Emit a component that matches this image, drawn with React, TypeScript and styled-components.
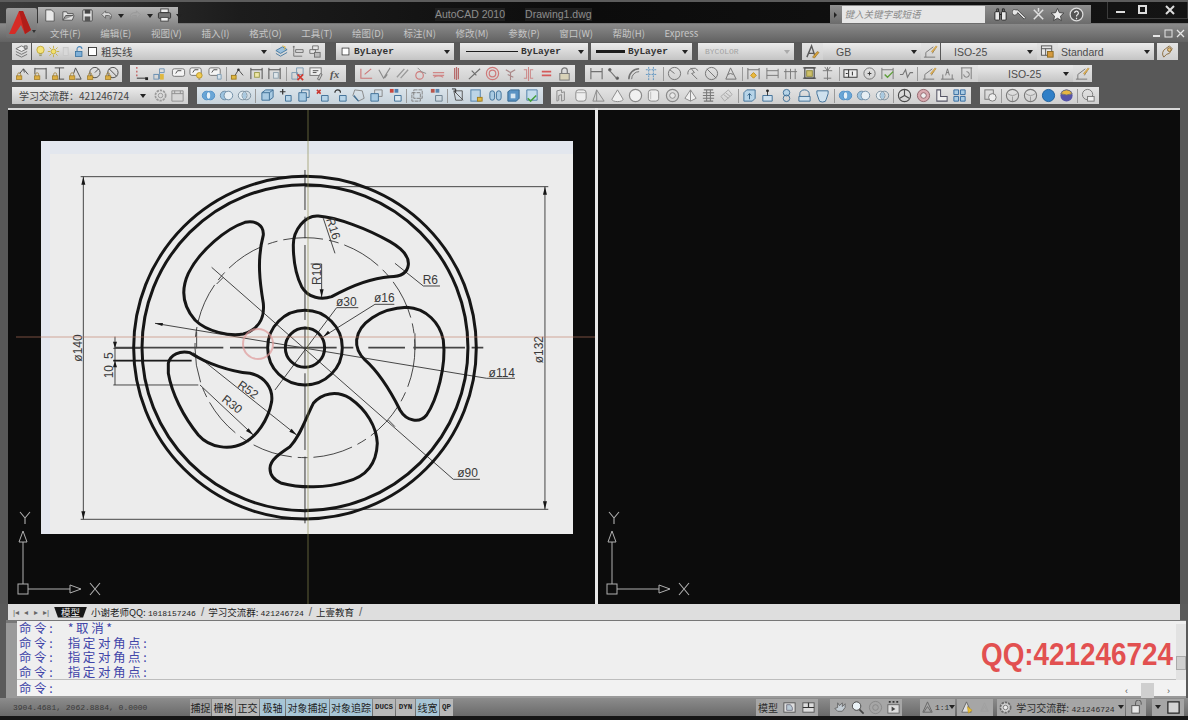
import React from "react";
import styled, { createGlobalStyle } from "styled-components";

const CJK = `"Noto Sans CJK SC", "Liberation Sans", sans-serif`;
const MONO = `"Liberation Mono", "Noto Sans CJK SC", monospace`;
const SANS = `"Liberation Sans", "Noto Sans CJK SC", sans-serif`;

const Global = createGlobalStyle`
  html, body { margin: 0; padding: 0; background: #000; }
  * { box-sizing: border-box; }
`;

const Shell = styled.div`
  width: 1188px;
  height: 720px;
  background: #5a5a5a;
  display: flex;
  flex-direction: column;
  overflow: hidden;
  position: relative;
  font-family: ${SANS};
`;

/* ---------- title bar ---------- */
const TitleBar = styled.div`
  height: 24px;
  flex: none;
  display: flex;
  align-items: flex-start;
  padding-left: 38px;
  background: linear-gradient(90deg, #3c3c3c 0, #1c1c1c 240px, #0c0c0c 50%, #141414 100%);
  border-top: 2px solid #5c5c5c;
  border-bottom: 1px solid #777;
`;

const Logo = styled.div`
  position: absolute;
  left: 6px;
  top: 8px;
  width: 31px;
  height: 30px;
  background: linear-gradient(#9c9c9c, #6f6f6f);
  border-radius: 2px;
`;

const QuickBar = styled.div`
  width: 140px;
  height: 17px;
  margin-top: 5px;
  padding-left: 4px;
  display: flex;
  align-items: center;
  gap: 4px;
  background: linear-gradient(#b4b4b4, #8a8a8a);
`;

const TitleText = styled.div<{ $ml: number }>`
  margin: 6px 0 0 ${(p) => p.$ml}px;
  font-size: 10.5px;
  line-height: 13px;
  color: #8d8d8d;
  background: #1f1f1f;
  white-space: nowrap;
`;

const SearchBox = styled.div`
  margin: 3px 0 0 238px;
  width: 262px;
  height: 19px;
  display: flex;
  align-items: center;
  background: linear-gradient(#8e8e8e, #6c6c6c);
`;

const SearchCaret = styled.div`
  width: 0;
  height: 0;
  margin: 0 5px 0 4px;
  border-left: 3px solid #222;
  border-top: 3px solid transparent;
  border-bottom: 3px solid transparent;
`;

const SearchInput = styled.div`
  width: 143px;
  height: 17px;
  padding-left: 3px;
  margin-right: 8px;
  background: #e6e6e6;
  color: #8a8a8a;
  font: italic 9.5px/17px ${CJK};
`;

const SearchIcons = styled.div`
  display: flex;
  gap: 4px;
`;

const WindowButtons = styled.div`
  margin: 0 0 0 16px;
  width: 81px;
  height: 17px;
  display: flex;
  align-items: center;
  border: 1px solid #3c3c3c;
  border-top: none;
  color: #ddd;
`;

const WinBtn = styled.div<{ $w: number }>`
  width: ${(p) => p.$w}px;
  display: flex;
  justify-content: center;
`;

/* ---------- menu ---------- */
const MenuBar = styled.div`
  height: 18px;
  flex: none;
  display: flex;
  align-items: center;
  gap: 19.6px;
  padding-left: 50px;
  background: linear-gradient(#8a8a8a, #626262);
`;

const MenuItem = styled.span`
  font: 9.5px/18px ${CJK};
  color: #c6c6c6;
  white-space: nowrap;
`;

const MenuSpacer = styled.div`
  margin-left: auto;
  width: 33px;
  margin-right: 3px;
  color: #e6e6e6;
  display: flex;
  justify-content: space-between;
`;

/* ---------- toolbars ---------- */
const ToolArea = styled.div`
  flex: none;
  height: 66px;
  padding: 1px 0 0 12px;
  display: flex;
  flex-direction: column;
  gap: 5px;
  background: #585858;
`;

const ToolRow = styled.div`
  display: flex;
  height: 17px;
`;

const Panel = styled.div<{ $w: number; $gap?: number; $tint?: boolean }>`
  width: ${(p) => p.$w}px;
  margin-left: ${(p) => p.$gap ?? 0}px;
  display: flex;
  align-items: center;
  justify-content: space-around;
  padding: 0 2px;
  background: ${(p) =>
    p.$tint ? "linear-gradient(#dbe5ec, #c8d3db)" : "linear-gradient(#e4e4e4, #cfcfcf)"};
`;

const Combo = styled.div<{ $w: number; $gap?: number; $mono?: boolean; $dim?: boolean; $pad?: number; $tight?: boolean }>`
  position: relative;
  width: ${(p) => p.$w}px;
  margin-left: ${(p) => p.$gap ?? 0}px;
  padding-left: ${(p) => p.$pad ?? 4}px;
  display: flex;
  align-items: center;
  gap: ${(p) => (p.$tight ? 0 : 3)}px;
  white-space: nowrap;
  overflow: hidden;
  background: linear-gradient(#ececec, #c4c4c4);
  color: ${(p) => (p.$dim ? "#a2a2a2" : p.$mono ? "#333" : "#4c4c4c")};
  font: ${(p) => (p.$mono ? `bold 9.5px ${MONO}` : `10.5px ${SANS}`)};
  &::after {
    content: "";
    position: absolute;
    right: 4px;
    top: 7px;
    border-top: 4px solid ${(p) => (p.$dim ? "#aaa" : "#222")};
    border-left: 3px solid transparent;
    border-right: 3px solid transparent;
  }
`;

const Divider = styled.i`
  width: 1px;
  height: 14px;
  flex: none;
  background: #9a9a9a;
`;

const LineSample = styled.div<{ $h: number; $w: number }>`
  width: ${(p) => p.$w}px;
  height: ${(p) => p.$h}px;
  background: #1c1c1c;
  flex: none;
`;

const IconSvg = styled.svg<{ $s?: number }>`
  width: ${(p) => p.$s ?? 15}px;
  height: ${(p) => p.$s ?? 15}px;
  flex: none;
  fill: none;
  stroke: #717171;
  stroke-width: 1;
`;

const CjkLabel = styled.span`
  margin-left: 2px;
  font: 10.5px ${CJK};
  color: #444;
`;

const ComboCjk = styled.span`
  font: 10px ${CJK};
  color: #444;
`;

const BYColor = styled.span`
  font: 8px ${MONO};
  color: #a2a2a2;
`;

const FxLabel = styled.span`
  font: italic bold 11px "Liberation Serif", serif;
  color: #555;
  width: 15px;
  text-align: center;
`;

const Lock = () => (
  <g stroke="#96721f" strokeWidth=".7">
    <path d="M2.8 10.5V8.8a1.6 1.6 0 0 1 3.2 0v1.7" />
    <rect x="1.5" y="10.5" width="5.8" height="4" fill="#dcae42" />
  </g>
);

const BLUE = "#4f8fc6";
const RED = "#c25a5a";
const YEL = "#dfb840";
const DARK = "#4a4a4a";

// 16 x 16 toolbar drawings, addressed by a short key
const shapes: Record<string, React.ReactNode> = {
  layers: (
    <>
      <path d="M2 5l6-3 6 3-6 3z" fill="#eee" />
      <path d="M2 8l6 3 6-3M2 11l6 3 6-3" />
      <path d="M11 2h3v3h-3z" fill="#bbb" />
    </>
  ),
  bulb: (
    <>
      <circle cx="8" cy="6" r="4.5" fill="#f3e27a" stroke="#c0a52c" />
      <path d="M6 11h4M6.5 13h3" stroke="#8a8a4a" />
    </>
  ),
  sun: (
    <>
      <circle cx="8" cy="8" r="3" fill="#f2e06c" stroke="#c2a92f" />
      <path d="M8 1v3M8 12v3M1 8h3M12 8h3M3 3l2 2M11 11l2 2M3 13l2-2M11 5l2-2" stroke="#c2a92f" />
    </>
  ),
  fade: <rect x="4" y="3" width="6" height="10" fill="#d8d8d8" stroke="#c6c6c6" />,
  padlock: (
    <>
      <path d="M5 8V5a3 3 0 0 1 6 0" stroke="#4c86b8" strokeWidth="1.3" />
      <rect x="3" y="8" width="8" height="6" fill="#7fb0d8" stroke="#34709f" />
    </>
  ),
  square: <rect x="3" y="3" width="10" height="10" fill="#fff" stroke="#222" />,
  layerA: (
    <>
      <path d="M2 7l7-4 5 3-7 4z" fill="#9cc1dd" stroke="#4a7ba0" />
      <path d="M2 10l5 3 7-4" stroke="#4a7ba0" />
      <path d="M9 2l3 1-1 3" stroke={YEL} />
    </>
  ),
  layerB: <path d="M3 3h2M4 2v3M6 6h8v3H6zM4 9v4h9M4 5v4" />,
  layerC: (
    <>
      <path d="M6 2h6v4H6zM3 6h6v4H3z" fill="#e6e6e6" />
      <rect x="8" y="9" width="6" height="5" fill="#bbb" />
    </>
  ),
  lockA: (
    <>
      <path d="M5 8l4-5 5 6M9 3l1 4" stroke={DARK} />
      <Lock />
    </>
  ),
  lockH: (
    <>
      <path d="M2 2v7M14 2v12M2 3h12" stroke={DARK} />
      <Lock />
    </>
  ),
  lockV: (
    <>
      <path d="M4 2h10M9 2v12M8 14h6" stroke={DARK} />
      <Lock />
    </>
  ),
  lockAng: (
    <>
      <path d="M8 2l6 12H8M8 2L6 8" stroke={DARK} />
      <Lock />
    </>
  ),
  lockR: (
    <>
      <circle cx="9.5" cy="7" r="5.5" stroke={DARK} />
      <path d="M9.5 7l4-4" stroke={DARK} />
      <Lock />
    </>
  ),
  lockD: (
    <>
      <circle cx="9.5" cy="7" r="5.5" stroke={DARK} />
      <path d="M5.5 3l8 8" stroke={DARK} />
      <Lock />
    </>
  ),
  perp: (
    <>
      <path d="M3 1v11" stroke={RED} strokeWidth="1.4" strokeDasharray="2 2" />
      <path d="M3 13h10" stroke={DARK} strokeWidth="1.2" />
      <path d="M12 12h3v3h-3z" fill="#222" stroke="none" />
    </>
  ),
  geo: (
    <>
      <path d="M2 9h6V3h5v4H8M8 9v5" stroke="#6f93b4" />
      <rect x="2" y="9" width="5" height="5" stroke="#6f93b4" />
      <rect x="9" y="9" width="3" height="5" fill={YEL} stroke={YEL} />
    </>
  ),
  tag: (
    <>
      <rect x="1.5" y="3" width="13" height="8" rx="2" fill="#f4f4f4" />
      <path d="M5 8l2-3h4" stroke={DARK} />
    </>
  ),
  tagBulb: (
    <>
      <rect x="1" y="2" width="12" height="8" rx="2" fill="#f4f4f4" />
      <path d="M4 7l2-3h4" stroke={DARK} />
      <circle cx="11" cy="10" r="3" fill="#f0cc52" stroke="#b8952c" />
      <path d="M10 14h2" stroke="#777" />
    </>
  ),
  tagQ: (
    <>
      <rect x="1" y="2" width="12" height="8" rx="2" fill="#f4f4f4" />
      <path d="M4 7l2-3h4" stroke={DARK} />
      <path d="M10 9h4v5h-4z" fill="#d5e1ea" stroke="#7f9db4" />
    </>
  ),
  tri: (
    <>
      <path d="M3 14L9 4l5 6" stroke={DARK} />
      <rect x="1.5" y="10" width="5" height="4" fill={YEL} stroke="#a37e22" />
      <circle cx="9" cy="4" r="1.4" fill="#333" stroke="none" />
    </>
  ),
  dimPin: (
    <>
      <path d="M2 2v12M14 2v12M2 4h12" stroke={DARK} />
      <rect x="6" y="7" width="5" height="5" fill="#efe7a6" stroke="#9a9a4a" />
    </>
  ),
  dimFrame: (
    <>
      <path d="M2 2v12M14 2v12M2 4h12" stroke={DARK} />
      <rect x="7" y="7" width="5" height="6" fill="#dfe6ea" stroke="#8da0ad" />
    </>
  ),
  delete: (
    <>
      <path d="M7 2h7v7H7z" stroke="#7b9ab2" />
      <path d="M2 7h6v7H2z" stroke="#7b9ab2" />
      <path d="M8 9l6 6M14 9l-6 6" stroke="#d03a32" strokeWidth="1.8" />
    </>
  ),
  tagPen: (
    <>
      <rect x="1" y="2" width="12" height="8" fill="#f0f0f0" />
      <path d="M4 5h6M4 7h4" stroke={DARK} />
      <path d="M9 14l3-6 2 1-3 6z" fill="#ccc" />
    </>
  ),
  redCheck: <path d="M2 3v10h12M13 3L6 9" stroke="#c77" strokeWidth="1.2" />,
  vee: <path d="M2 4l5 9 7-11M8 13l3-4" stroke="#8b8b8b" strokeWidth="1.2" />,
  slashes: <path d="M2 12L10 3M6 13L14 4" stroke="#9a9a9a" strokeWidth="1.4" />,
  knot: (
    <>
      <circle cx="7" cy="10" r="4" stroke="#cf7a7a" strokeWidth="1.2" />
      <path d="M5 2l4 4 5 2" stroke="#8b8b8b" />
    </>
  ),
  tangent: <path d="M2 7h12M2 10h12M3 12q5-3 10 0" stroke="#d08888" strokeWidth="1.2" />,
  stripes: <path d="M6 2v12M10 2v12M8 1v14" stroke="#b56a6a" strokeWidth="1.3" />,
  crossY: <path d="M2 14L14 3M5 5l5 5" stroke="#6f6f6f" strokeWidth="1.3" />,
  target: (
    <>
      <circle cx="8" cy="8" r="6.5" stroke="#cf7a7a" strokeWidth="1.3" />
      <circle cx="8" cy="8" r="3.5" stroke="#cf7a7a" strokeWidth="1.3" />
    </>
  ),
  fork: <path d="M3 4l5 3 5-3M8 7v8M5 9l6 3" stroke="#a88" strokeWidth="1.2" />,
  mirror: <path d="M3 4h3v9H3M13 4h-3v9h3M8 1v15" stroke="#c88" strokeWidth="1.1" />,
  equal: <path d="M3 6h10M3 10h10" stroke="#d45a5a" strokeWidth="1.8" />,
  bigLock: (
    <>
      <path d="M5 8V5a3 3 0 0 1 6 0v3" stroke="#777" strokeWidth="1.3" />
      <rect x="3" y="8" width="10" height="7" fill="#d8d2b8" stroke="#777" />
    </>
  ),
  hDim: <path d="M2 2v12M14 2v12M2 6h12" strokeWidth="1.2" />,
  alDim: (
    <>
      <path d="M2 4l8 9" strokeWidth="1.2" />
      <circle cx="3" cy="4" r="1.4" fill="#555" />
      <circle cx="11" cy="13" r="1.4" fill="#555" />
    </>
  ),
  arcDim: (
    <>
      <path d="M3 14A11 11 0 0 1 14 3" strokeWidth="1.6" />
      <path d="M6 14a8 8 0 0 1 8-8" />
    </>
  ),
  ordDim: <path d="M2 4h12M2 9h12M5 1v14M10 1v14" stroke="#5d93c0" strokeDasharray="2 1" />,
  radius: (
    <>
      <circle cx="8" cy="8" r="6.5" />
      <path d="M8 8L3 4" />
    </>
  ),
  jogged: (
    <>
      <path d="M2 9A6 6 0 0 1 13 5" />
      <path d="M5 2l4 5-3 1 6 6" />
    </>
  ),
  diam: (
    <>
      <circle cx="8" cy="8" r="6.5" />
      <path d="M3 3l10 10" />
    </>
  ),
  angle: <path d="M3 14L8 2l6 12zM5 9q3-2 6 0" />,
  quick: (
    <>
      <path d="M2 2v12M14 2v12M2 4h12" stroke="#777" strokeWidth="1.1" />
      <path d="M8 7l3 3-3 3-3-3z" fill="#e9b93e" stroke="#c08e1f" />
    </>
  ),
  base: <path d="M2 2v12M14 3v10M2 5h12M2 10h12" stroke="#777" />,
  cont: <path d="M3 3v11M8 3v11M13 3v11M1 6h14" stroke="#777" />,
  tolBox: (
    <>
      <path d="M3 2h10v11H3z" stroke={DARK} strokeWidth="1.3" />
      <rect x="5" y="5" width="6" height="6" fill="#cfc06a" stroke="#8f8a3c" />
      <path d="M1 2h14M1 13h14" stroke={DARK} />
    </>
  ),
  tee: <path d="M8 1v14M3 5h10M4 13h8M5 1l3 4 3-4" stroke="#777" />,
  tolerance: (
    <>
      <rect x="1" y="4" width="14" height="8" fill="#eee" stroke="#333" />
      <path d="M6 4v8M10 6v4M3 8h2" stroke="#222" />
    </>
  ),
  center: (
    <>
      <circle cx="8" cy="8" r="6" />
      <path d="M6 8h4M8 6v4" stroke="#333" />
    </>
  ),
  inspect: (
    <>
      <path d="M2 2v12M14 2v12M2 4h12" stroke="#777" />
      <path d="M5 9l3 3 6-6" stroke="#5e9e3a" strokeWidth="1.5" />
    </>
  ),
  jogLine: <path d="M1 9h3l3-5 2 8 3-5h3" stroke="#777" strokeWidth="1.2" />,
  dimEdit: (
    <>
      <path d="M1 14h12M3 14V9l8-6M13 5l-3 5" stroke="#777" />
      <path d="M9 8l5-6 1 1-5 6z" fill="#e8b85a" stroke="#b58a30" strokeWidth=".6" />
    </>
  ),
  dimText: <path d="M1 14h14M3 14V9M13 14V9M6 10l2-7 2 7M7 7h2" stroke="#777" />,
  dimUpdate: <path d="M2 2h12M3 2v12M13 2v12M5 9a3 3 0 1 0 3-3" stroke="#777" />,
  gear: (
    <>
      <circle cx="8" cy="8" r="5.5" strokeDasharray="2.5 1" strokeWidth="1.8" stroke="#9a9a9a" />
      <circle cx="8" cy="8" r="2.4" stroke="#999" />
    </>
  ),
  wsSave: (
    <>
      <path d="M2 3h12v11H2z" stroke="#8f8f8f" fill="#d6d6d6" />
      <path d="M2 6h12M5 3v3M11 3v3" stroke="#8f8f8f" />
    </>
  ),
  vennA: (
    <>
      <circle cx="6" cy="8" r="4.6" fill="#6aa6d6" stroke={BLUE} />
      <circle cx="10" cy="8" r="4.6" fill="#6aa6d6" stroke={BLUE} />
      <ellipse cx="8" cy="8" rx="1.8" ry="3.4" fill="#e6f0f7" stroke="none" />
    </>
  ),
  vennB: (
    <>
      <circle cx="6" cy="8" r="4.6" fill="#9dc4e0" stroke="#6f8da5" />
      <circle cx="10" cy="8" r="4.6" fill="#e6eef3" stroke="#6f8da5" />
    </>
  ),
  vennC: (
    <>
      <circle cx="6" cy="8" r="4.6" fill="#e6eef3" stroke="#7b8f9e" />
      <circle cx="10" cy="8" r="4.6" stroke="#7b8f9e" />
      <ellipse cx="8" cy="8" rx="1.8" ry="3.4" fill="#a9c9e0" stroke="none" />
    </>
  ),
  faceMove: (
    <>
      <path d="M2 5l4-3h8v8l-4 3H2z" fill="#a9cbe3" stroke="#3f6f96" />
      <path d="M2 5h8v8M10 5l4-3" stroke="#3f6f96" />
    </>
  ),
  cross: (
    <>
      <path d="M5 1v6M2 4h6" stroke="#333" strokeWidth="1.3" />
      <path d="M8 8h6v6H8z" fill="#b7d4e8" stroke="#3f6f96" />
    </>
  ),
  stack: (
    <>
      <path d="M6 2h8v8H6z" stroke="#3f6f96" />
      <path d="M3 5h8v9H3z" fill="#a9cbe3" stroke="#3f6f96" />
    </>
  ),
  faceDel: (
    <>
      <path d="M2 2l4 4M6 2L2 6" stroke="#c8362e" strokeWidth="1.6" />
      <path d="M7 8h7v6H7z" fill="#b7d4e8" stroke="#3f6f96" />
    </>
  ),
  faceRot: (
    <>
      <path d="M2 5a3 3 0 0 1 6 0" stroke="#333" strokeWidth="1.2" />
      <path d="M7 8h7v6H7z" fill="#b7d4e8" stroke="#3f6f96" />
    </>
  ),
  faceTaper: (
    <>
      <path d="M4 2l8 1 2 8-6 3-6-6z" stroke="#888" />
      <path d="M3 8l5 6" stroke="#3f6f96" strokeWidth="1.4" />
    </>
  ),
  faceCopy: (
    <>
      <path d="M6 2h8v7H6z" stroke="#888" />
      <path d="M2 6h8v8H2z" fill="#a9cbe3" stroke="#3f6f96" />
    </>
  ),
  faceColor: (
    <>
      <rect x="2" y="1" width="4" height="4" fill="#c8473e" stroke="none" />
      <rect x="7" y="1" width="4" height="4" fill="#4f7fb0" stroke="none" />
      <path d="M7 8h7v6H7z" fill="#d9e6ef" stroke="#3f6f96" />
    </>
  ),
  edgeCopy: <path d="M4 2h9v9H4zM2 5h9v9H2z" stroke="#7f7f7f" strokeDasharray="4 1" />,
  edgeColor: (
    <>
      <rect x="2" y="1" width="4" height="4" fill="#b8564c" stroke="none" />
      <rect x="7" y="1" width="4" height="4" fill="#5c86ad" stroke="none" />
      <path d="M7 8h7v6H7z" stroke="#6b7f8e" />
    </>
  ),
  imprint: (
    <>
      <path d="M3 3l10 10M3 3h9v10H5z" stroke="#555" />
      <path d="M1 1h4v4" stroke="#222" />
    </>
  ),
  clean: (
    <>
      <rect x="2" y="2" width="10" height="12" fill="#bcd4e6" stroke="#4f7fa8" />
      <rect x="9" y="10" width="5" height="4" fill={YEL} stroke="#a37e22" />
    </>
  ),
  separate: (
    <>
      <rect x="2" y="3" width="5" height="10" rx="2.5" fill="#a9cbe3" stroke="#3f6f96" />
      <rect x="9" y="3" width="5" height="10" rx="2.5" fill="#a9cbe3" stroke="#3f6f96" />
    </>
  ),
  shell: (
    <>
      <path d="M2 4l3-2h9v9l-3 3H2z" fill="#5a93c4" stroke="#33668f" />
      <rect x="5" y="6" width="5" height="5" fill="#d6e6f1" stroke="none" />
    </>
  ),
  check: (
    <>
      <path d="M3 2h11v11H3z" fill="#c4dcec" stroke="#4f7fa8" />
      <path d="M4 11l3 3 6-6" stroke="#45a03a" strokeWidth="1.6" />
    </>
  ),
  polysolid: <path d="M2 3l5-1v3l3-1v9l-3 1V7L4 8v5l-2 1z" stroke="#8a8a8a" />,
  box: (
    <>
      <rect x="3" y="2" width="11" height="12" rx="3" fill="#eee" stroke="#888" />
      <path d="M3 5h11" stroke="#aaa" />
    </>
  ),
  wedge: <path d="M2 14h12L6 2zM6 2v12" stroke="#8a8a8a" />,
  cone: <path d="M8 2L2 12a6 2.5 0 0 0 12 0z" stroke="#8a8a8a" fill="#f0f0f0" />,
  sphere: <circle cx="8" cy="8" r="6.5" stroke="#8a8a8a" fill="#f0f0f0" strokeWidth="1.3" />,
  cylinder: (
    <>
      <rect x="2.5" y="2" width="11" height="12" rx="3" stroke="#888" fill="#eee" />
      <path d="M5 4v8" stroke="#bbb" />
    </>
  ),
  torus: (
    <>
      <circle cx="8" cy="8" r="6.5" stroke="#8a8a8a" strokeWidth="1.3" />
      <circle cx="8" cy="8" r="3" stroke="#8a8a8a" fill="#e8e8e8" />
    </>
  ),
  pyramid: <path d="M8 2L2 11l6 3 6-3zM8 2v12" stroke="#8a8a8a" fill="#f0f0f0" />,
  mesh: <path d="M3 2h10M2 5h12M2 8h12M2 11h12M3 14h10M6 2v12M10 2v12" stroke="#777" strokeWidth="1.1" />,
  planar: <path d="M2 9l8-7 4 5-8 7zM5 7l5 4M7 5l5 4" stroke="#aaa" />,
  extrude: (
    <>
      <path d="M2 5l3-3h9v9l-3 3H2z" fill="#b7d4e8" stroke="#3f6f96" />
      <path d="M8 12V6M6 8l2-2 2 2" stroke="#2b5c82" />
    </>
  ),
  press: (
    <>
      <path d="M3 8h10v6H3z" fill="#cfe1ee" stroke="#3f6f96" />
      <path d="M8 8V3" stroke="#333" />
      <circle cx="8" cy="3" r="1.5" fill="#222" stroke="none" />
    </>
  ),
  sweep: (
    <>
      <circle cx="8" cy="5" r="3.5" fill="#b7d4e8" stroke="#3f6f96" />
      <circle cx="8" cy="11" r="3.5" stroke="#3f6f96" />
    </>
  ),
  revolve: (
    <>
      <path d="M3 14V6a5 4 0 0 1 10 0v8" stroke="#3f6f96" />
      <path d="M2 9h12v5H2z" fill="#cfe1ee" stroke="#3f6f96" />
    </>
  ),
  loft: <path d="M2 3h12v3l-2 6a4 3 0 0 1-8 0L2 6z" fill="#cfe1ee" stroke="#3f6f96" />,
  gizmo: (
    <>
      <circle cx="8" cy="8" r="6.5" stroke={DARK} strokeWidth="1.2" />
      <path d="M8 2v6M8 8l5 3M8 8l-5 3" stroke={DARK} strokeWidth="1.2" />
    </>
  ),
  pink: (
    <>
      <circle cx="8" cy="8" r="6.5" fill="#d9aab0" stroke="#90636a" />
      <circle cx="8" cy="8" r="3" fill="#eee" stroke="#90636a" />
    </>
  ),
  ucsL: <path d="M3 2h4v7h7v5H3z" fill="#eee" stroke="#556" strokeWidth="1.1" />,
  grid: <path d="M2 2h5v5H2zM9 2h5v5H9zM2 9h5v5H2zM9 9h5v5H9z" fill="#a9cbe3" stroke="#336a9f" />,
  regen: (
    <>
      <rect x="2" y="2" width="9" height="10" stroke="#777" />
      <circle cx="10" cy="10" r="4" fill="#eee" stroke="#777" />
    </>
  ),
  wire: (
    <>
      <circle cx="8" cy="8" r="6.5" stroke="#7a7a7a" strokeWidth="1.2" />
      <path d="M3 6q5 4 10 0M8 14V9" stroke="#999" />
    </>
  ),
  blueBall: <circle cx="8" cy="8" r="6.5" fill="#2f7fc7" stroke="#1d5f9c" />,
  colorBall: (
    <>
      <circle cx="8" cy="8" r="6.5" fill="#5654a8" stroke="none" />
      <path d="M2 6a6.5 6.5 0 0 1 12 0q-6 3-12 0z" fill="#e8b640" />
    </>
  ),
  render: (
    <>
      <circle cx="7" cy="7" r="5.5" stroke="#7a7a7a" />
      <rect x="7" y="9" width="7" height="5" fill="#eee" stroke="#777" />
    </>
  ),
  styleA: (
    <>
      <path d="M2 14L7 2l4 12M4 10h5" stroke="#5a5a5a" strokeWidth="1.5" />
      <path d="M8 14l5-6 2 1-5 6z" fill="#d8a23a" stroke="#8c6a20" strokeWidth=".6" />
    </>
  ),
  tableStyle: (
    <>
      <rect x="1.5" y="2" width="11" height="10" fill="#e6e6e6" stroke="#555" />
      <path d="M1.5 5h11M6 5v7" stroke="#555" />
      <rect x="8" y="8" width="6" height="6" fill="#d59a3e" stroke="#8c6a20" />
    </>
  ),
  mleader: (
    <>
      <path d="M4 14a6 6 0 0 1 2-9l4-3 3 3-3 5q-3 0-6 4z" stroke="#8a6a3a" />
      <circle cx="10" cy="6" r="2" fill="#e4c078" stroke="#8a6a3a" />
    </>
  ),
  fresh: <path d="M4 2h6l3 3v9H4z" fill="#e8e8e8" stroke="#555" />,
  open: <path d="M2 13V4h4l1 2h6v2H5l-3 5h10l2-5" fill="#e4e4e4" stroke="#555" />,
  floppy: (
    <>
      <rect x="3" y="2" width="10" height="12" rx="1" fill="#e4e4e4" stroke="#444" />
      <rect x="5" y="2" width="6" height="4" fill="#444" stroke="none" />
      <rect x="5" y="9" width="6" height="5" fill="#555" stroke="none" />
    </>
  ),
  undo: <path d="M3 7l4-4v2h3a4 4 0 0 1 2 7V9a2 2 0 0 0-2-1H7v3z" fill="#d8d8d8" stroke="#666" />,
  redo: <path d="M13 7L9 3v2H6a4 4 0 0 0-2 7V9a2 2 0 0 1 2-1h3v3z" fill="#a4a4a4" stroke="#999" />,
  printer: (
    <>
      <rect x="4" y="1" width="8" height="4" fill="#eee" stroke="#444" />
      <rect x="1.5" y="5" width="13" height="6" rx="1" fill="#777" stroke="#333" />
      <rect x="4" y="10" width="8" height="4" fill="#eee" stroke="#444" />
    </>
  ),
  binoculars: (
    <>
      <rect x="2" y="5" width="5" height="9" rx="1" fill="#e8e8e8" stroke="#222" />
      <rect x="9" y="5" width="5" height="9" rx="1" fill="#e8e8e8" stroke="#222" />
      <path d="M4 5V2h2v3M10 5V2h2v3M7 8h2" stroke="#222" />
    </>
  ),
  key: <path d="M4 3a3 3 0 1 0 2 3l7 7 1.5-1.5-7-7a3 3 0 0 0-3.5-1.5z" fill="#e6e6e6" stroke="#444" />,
  crossPerson: <path d="M3 3l10 10M13 3L3 13M8 1v4" stroke="#e0e0e0" strokeWidth="1.6" />,
  star: <path d="M8 1.5l2 4.5 4.8.5-3.6 3.2 1 4.8L8 12l-4.2 2.5 1-4.8L1.200 6.5 6 6z" fill="#eee" stroke="#444" />,
  help: (
    <>
      <circle cx="8" cy="8" r="6.8" fill="#555" stroke="#ddd" strokeWidth="1.3" />
      <path d="M6 6.5a2 2 0 1 1 3 1.7q-1 .5-1 1.8M8 11.5v1.5" stroke="#eee" strokeWidth="1.3" />
    </>
  ),
  paper: (
    <>
      <rect x="2" y="3" width="12" height="10" fill="#ddd" stroke="#555" />
      <path d="M5 5h4l2 3v3H5z" fill="#b9c9d4" stroke="#778" />
    </>
  ),
  twoPanes: (
    <>
      <rect x="2" y="3" width="12" height="10" fill="#ddd" stroke="#555" />
      <path d="M2 8h12M8 3v5" stroke="#333" strokeWidth="1.3" />
    </>
  ),
  hand: <path d="M3 9l3 3h5l3-4V4l-3 3V3L8 6 6 3v5z" fill="#c4cdd4" stroke="#666" />,
  zoom: (
    <>
      <circle cx="7" cy="6.5" r="4.5" fill="#eaf2f7" stroke="#444" />
      <path d="M10 10l4.5 4.5" stroke="#444" strokeWidth="1.8" />
    </>
  ),
  wheel: (
    <>
      <circle cx="8" cy="8" r="6.5" stroke="#888" />
      <circle cx="8" cy="8" r="3" stroke="#888" />
    </>
  ),
  motion: (
    <>
      <rect x="2" y="5" width="12" height="9" fill="#ddd" stroke="#666" />
      <path d="M3 2h2M7 2h2M11 2h2" stroke="#333" strokeWidth="2" />
      <path d="M6 7l4 2.5L6 12z" fill="#444" stroke="none" />
    </>
  ),
  anno: <path d="M8 2L3 13h10zM8 7l-4 6M8 7l4 6" stroke="#666" />,
  annoY: (
    <>
      <path d="M8 2L3 13h10z" fill="#ddd" stroke="#666" />
      <path d="M9 7l5 4-4 3z" fill="#e9c030" stroke="#b08a20" strokeWidth=".6" />
    </>
  ),
  annoFade: <path d="M8 3L4 12h8zM8 7l-3 5M8 7l3 5" stroke="#a0a0a0" />,
  wsGear: (
    <>
      <circle cx="8" cy="8" r="5.5" fill="#cfcfcf" stroke="#6a6a6a" strokeDasharray="2.5 1" strokeWidth="1.8" />
      <circle cx="8" cy="8" r="2.4" fill="#eee" stroke="#777" />
    </>
  ),
  tool: (
    <>
      <path d="M7 6V3a3 3 0 0 1 6 0v2" stroke="#555" />
      <rect x="3" y="6" width="8" height="8" fill="#e8e8e8" stroke="#555" />
    </>
  ),
  clean2: <rect x="2" y="2" width="12" height="12" fill="#d4d4d4" stroke="#222" strokeWidth="1.3" />,
};

const Icon = ({ k, s }: { k: string; s?: number }) => (
  <IconSvg viewBox="0 0 16 16" $s={s}>
    {shapes[k]}
  </IconSvg>
);

// "a b | c" renders icons a and b, a divider, then icon c
const Icons = ({ list }: { list: string }) => (
  <>
    {list.split(" ").map((k, i) => (k === "|" ? <Divider key={i} /> : <Icon key={i} k={k} />))}
  </>
);

/* ---------- viewports ---------- */
const Viewports = styled.div`
  flex: none;
  height: 496px;
  padding: 0 8px;
  display: flex;
  background: #585858;
`;

const Canvas = styled.svg`
  display: block;
  width: 587px;
  height: 496px;
  flex: none;
  background: #0c0c0c;
  border-top: 2px solid #d8d8d8;
`;

const RightCanvas = styled.svg`
  display: block;
  flex: 1;
  height: 496px;
  background: #0c0c0c;
  border-top: 2px solid #d8d8d8;
`;

const Sash = styled.div`
  width: 590px;
  flex: none;
  background: #e8e8e8;
`;

const Ucs = ({ x, y }: { x: number; y: number }) => (
  <g transform={`translate(${x} ${y})`} fill="none" stroke="#b0b0b0" strokeWidth="1">
    <rect x="-5" y="-5" width="10" height="10" />
    <path d="M5 0h42M0 -5v-42" />
    <path d="M47 -4l11 4-11 4zM-4 -47L0 -58l4 11z" />
    <path d="M67 -6l10 12M77 -6L67 6" strokeWidth="1.1" />
    <path d="M-3 -77l5 6 5 -6M2 -71v6" strokeWidth="1.1" />
  </g>
);

const Dim = styled.text`
  font-family: "Liberation Sans", sans-serif;
  font-size: 36px;
  fill: #3a3a3a;
  stroke: none;
`;

const Wheel = () => (
  <g transform="translate(60 160) scale(.3333)" fill="none" stroke="#161616">
    {/* thin construction and dimension lines */}
    <g strokeWidth="2.6" stroke="#2c2c2c">
      <circle cx="735" cy="563" r="330" strokeDasharray="120 18 30 18" />
      <path d="M62 50H740M62 1078H740M70 50V1078" />
      <path d="M735 80H1465M735 1048H1465M1455 80V1048" />
      <path d="M165 530V675M160 565H240M160 602H330M160 675H415" />
      <path d="M455 322L1180 958H1260" />
      <path d="M285 490L1280 655H1365" />
      <path d="M790 530L945 433H1003" />
      <path d="M645 690L830 443H895" />
      <path d="M1005 310L1090 378H1140" />
      <path d="M790 175L825 280" />
      <path d="M752 312H785V412" />
      <path d="M400 578L710 825" />
      <path d="M420 675L580 825" />
      <path d="M410 515v50M1065 520v50M470 372l20 -20M985 780l20 20" />
      {/* arrow heads */}
      <g fill="#161616" stroke="none">
        <path d="M70 50l-6 24h12zM70 1078l-6-24h12zM1455 80l-6 24h12zM1455 1048l-6-24h12z" />
        <path d="M165 565l-6-20h12zM165 602l-6 20h12z" />
        <path d="M285 490l24 -1 -2 9zM785 412l-6-24h12zM710 825l-22-10 7-9zM580 825l-22-12 8-8zM790 530l14-18 6 8z" />
      </g>
    </g>
    {/* centre lines */}
    <path d="M165 563H490M510 563H620M640 563H830M850 563H880M925 563H1035M1060 563H1215M1235 563H1270" strokeWidth="5" stroke="#444" />
    <path d="M735 30V150M735 170V235M735 255V480M735 500V620M735 640V870M735 890V1090" strokeWidth="3" stroke="#333" />
    <path d="M160 602H395" strokeWidth="5" stroke="#1c1c1c" />
    {/* rim and hub */}
    <g strokeWidth="9">
      <circle cx="735" cy="563" r="514" />
      <circle cx="735" cy="563" r="489" />
      <circle cx="735" cy="563" r="112" />
      <circle cx="735" cy="563" r="59" />
    </g>
    {/* five spoke windows */}
    <g strokeWidth="9" strokeLinejoin="round">
      <path d="M700 255C700 210 735 165 775 168C830 172 920 205 990 245C1030 268 1048 290 1045 315C1042 340 1020 350 990 350C920 355 860 385 815 410C785 420 745 415 725 380C705 340 700 300 700 255Z" />
      <path d="M610 225C612 195 585 180 555 187C500 205 420 270 385 340C360 395 370 440 405 480C440 515 510 530 550 522C590 510 615 480 610 430C600 370 590 300 610 225Z" />
      <path d="M325 610C330 585 360 570 390 578C440 610 510 635 570 640C615 650 640 685 635 725C625 780 590 830 550 850C510 870 450 865 415 825C370 770 335 700 325 640Z" />
      <path d="M630 925C630 900 660 880 690 860C720 830 735 780 760 730C785 700 830 690 870 715C920 750 950 800 952 850C950 910 920 950 860 965C800 985 720 985 665 970C640 960 630 945 630 925Z" />
      <path d="M890 540C895 490 960 445 1040 442C1100 445 1140 490 1150 540C1160 620 1130 720 1100 765C1080 790 1040 785 1020 750C990 690 960 640 915 600C895 580 888 560 890 540Z" />
    </g>
    <Dim transform="translate(66 605) rotate(-90)">ø140</Dim>
    <Dim transform="translate(1448 610) rotate(-90)">ø132</Dim>
    <Dim transform="translate(160 655) rotate(-90)">10</Dim>
    <Dim transform="translate(160 597) rotate(-90)">5</Dim>
    <Dim x="1286" y="650">ø114</Dim>
    <Dim x="1192" y="952">ø90</Dim>
    <Dim x="942" y="427">ø16</Dim>
    <Dim x="828" y="439">ø30</Dim>
    <Dim x="1088" y="373">R6</Dim>
    <Dim transform="translate(782 375) rotate(-90)">R10</Dim>
    <Dim transform="translate(798 178) rotate(72)">R16</Dim>
    <Dim transform="translate(530 680) rotate(35)">R52</Dim>
    <Dim transform="translate(483 722) rotate(38)">R30</Dim>
  </g>
);

/* ---------- layout tabs ---------- */
const TabBar = styled.div`
  flex: none;
  height: 16px;
  margin: 0 8px;
  padding-left: 3px;
  display: flex;
  align-items: center;
  background: #dedede;
`;

const TabNav = styled.span`
  font: 8px ${SANS};
  color: #666;
  width: 10px;
  text-align: center;
`;

const ActiveTab = styled.span`
  margin-left: 3px;
  padding: 0 7px;
  height: 11px;
  background: #161616;
  color: #eee;
  font: 9.5px/11px ${CJK};
  clip-path: polygon(0 0, 100% 0, 88% 100%, 12% 100%);
`;

const Tab = styled.span`
  margin-left: 4px;
  font: 9.5px/14px ${CJK};
  color: #222;
  white-space: nowrap;
  & b {
    font: 8px ${MONO};
  }
`;

const TabSlash = styled.span`
  margin-left: 5px;
  font: 12px/14px ${SANS};
  color: #666;
`;

/* ---------- command window ---------- */
const CommandWindow = styled.div`
  flex: none;
  position: relative;
  height: 78px;
  margin: 0 2px 0 6px;
  border-top: 3px solid #777;
  padding-left: 11px;
  background: #9a9a9a;
`;

const History = styled.div`
  height: 58px;
  padding-left: 2px;
  background: #efefef;
  & > :first-child {
    margin-top: -2px;
  }
`;

const CommandLine = styled.div`
  font: 12.5px/14.6px ${CJK};
  letter-spacing: 2.6px;
  word-spacing: 7px;
  color: #4044a8;
  white-space: nowrap;
`;

const InputRow = styled.div`
  height: 17px;
  padding: 1px 0 0 2px;
  background: #f2f2f2;
  border-top: 1px solid #bdbdbd;
`;

const QQ = styled.div`
  position: absolute;
  left: 975px;
  top: 15px;
  font: bold 32px/32px ${SANS};
  color: #e25050;
  transform: scaleX(0.87);
  transform-origin: left center;
`;

const VScroll = styled.div`
  position: absolute;
  right: 0;
  top: 1px;
  width: 10px;
  height: 56px;
  background: #e2e2e2;
  &::after {
    content: "";
    position: absolute;
    left: 0;
    right: 0;
    top: 32px;
    height: 12px;
    background: #cfcfcf;
    border: 1px solid #aaa;
  }
`;

const HScroll = styled.div`
  position: absolute;
  right: 6px;
  bottom: 0;
  width: 60px;
  height: 15px;
  display: flex;
  align-items: center;
  justify-content: space-between;
  padding: 0 10px 0 5px;
  font: 9px ${SANS};
  color: #555;
  & i {
    width: 13px;
    height: 15px;
    background: #cfcfcf;
  }
`;

/* ---------- status bar ---------- */
const StatusBar = styled.div`
  flex: none;
  height: 18px;
  display: flex;
  align-items: center;
  padding-left: 13px;
  background: linear-gradient(#8c8c8c, #6a6a6a);
`;

const Coords = styled.span`
  width: 177px;
  font: 8px ${MONO};
  color: #3a3a3a;
  white-space: nowrap;
`;

const StatusToggle = styled.span<{ $w: number; $on?: boolean; $dark?: boolean; $mono?: boolean }>`
  width: ${(p) => p.$w}px;
  height: 17px;
  margin-right: 1px;
  display: flex;
  align-items: center;
  justify-content: center;
  white-space: nowrap;
  font: ${(p) => (p.$mono ? `bold 7.5px ${MONO}` : `10px ${CJK}`)};
  color: #222;
  background: ${(p) => (p.$on ? "#a8c6d6" : p.$dark ? "#a2a2a2" : "#b8b8b8")};
`;

const StatusGroup = styled.div<{ $ml: number; $w: number }>`
  margin-left: ${(p) => p.$ml}px;
  width: ${(p) => p.$w}px;
  height: 17px;
  flex: none;
  display: flex;
  align-items: center;
  justify-content: space-around;
  background: #a6a6a6;
  color: #2e2e2e;
  font: 10px ${CJK};
  white-space: nowrap;
  & b {
    font: 8px ${MONO};
  }
`;

const BottomEdge = styled.div`
  flex: 1;
  background: #161616;
`;

const Caret = styled.i`
  border-top: 4px solid #222;
  border-left: 3px solid transparent;
  border-right: 3px solid transparent;
`;

const MENU = ["文件(F)", "编辑(E)", "视图(V)", "插入(I)", "格式(O)", "工具(T)", "绘图(D)", "标注(N)", "修改(M)", "参数(P)", "窗口(W)", "帮助(H)", "Express"];

export default function App() {
  return (
    <Shell>
      <Global />
      <TitleBar>
        <QuickBar>
          <Icons list="fresh open floppy undo" />
          <Caret />
          <Icon k="redo" />
          <Caret />
          <Icon k="printer" />
          <Caret />
        </QuickBar>
        <TitleText $ml={257}>AutoCAD 2010</TitleText>
        <TitleText $ml={20}>Drawing1.dwg</TitleText>
        <SearchBox>
          <SearchCaret />
          <SearchInput>键入关键字或短语</SearchInput>
          <SearchIcons>
            <Icons list="binoculars key crossPerson star help" />
          </SearchIcons>
        </SearchBox>
        <WindowButtons>
          <WinBtn $w={26}>
            <svg width="10" height="8"><rect x="0" y="5" width="9" height="2" fill="#ddd" /></svg>
          </WinBtn>
          <WinBtn $w={20}>
            <svg width="10" height="10"><rect x="1" y="1" width="7" height="7" fill="none" stroke="#ddd" strokeWidth="2" /></svg>
          </WinBtn>
          <WinBtn $w={35}>
            <svg width="10" height="10"><path d="M1 1l8 8M9 1L1 9" stroke="#ddd" strokeWidth="2" /></svg>
          </WinBtn>
        </WindowButtons>
      </TitleBar>
      <Logo>
        <svg width="31" height="30" viewBox="0 0 31 30">
          <path d="M3 26L13 3h4l8 19-6 4-4-9-6 9z" fill="#d62c26" />
          <path d="M13 3h4l8 19-6 4z" fill="#b01e1a" />
          <path d="M26 22h4l-2 3z" fill="#333" />
        </svg>
      </Logo>
      <MenuBar>
        {MENU.map((m) => (
          <MenuItem key={m}>{m}</MenuItem>
        ))}
        <MenuSpacer>
          <svg width="9" height="10"><rect x="1" y="7" width="7" height="2" fill="#e6e6e6" /></svg>
          <svg width="9" height="10"><rect x="1" y="2" width="7" height="7" fill="none" stroke="#e6e6e6" /></svg>
          <svg width="9" height="10"><path d="M1 2l7 7M8 2L1 9" stroke="#e6e6e6" strokeWidth="1.3" /></svg>
        </MenuSpacer>
      </MenuBar>

      <ToolArea>
        <ToolRow>
          <Panel $w={19}>
            <Icon k="layers" />
          </Panel>
          <Combo $w={239} $gap={1} $pad={2} $tight>
            <Icon k="bulb" s={13} />
            <Icon k="sun" s={13} />
            <Icon k="fade" s={13} />
            <Icon k="padlock" s={13} />
            <Icon k="square" s={13} />
            <CjkLabel>粗实线</CjkLabel>
          </Combo>
          <Panel $w={54}>
            <Icons list="layerA layerB layerC" />
          </Panel>
          <Combo $w={118} $gap={11} $mono $pad={4}>
            <Icon k="square" s={11} />
            ByLayer
          </Combo>
          <Combo $w={128} $gap={6} $mono $pad={6}>
            <LineSample $h={1} $w={52} />
            ByLayer
          </Combo>
          <Combo $w={101} $gap={3} $mono $pad={5}>
            <LineSample $h={3} $w={29} />
            ByLayer
          </Combo>
          <Combo $w={96} $gap={6} $mono $dim $pad={7}>
            <BYColor>BYCOLOR</BYColor>
          </Combo>
          <Panel $w={21} $gap={8}>
            <Icon k="styleA" />
          </Panel>
          <Combo $w={98} $pad={13}>GB</Combo>
          <Panel $w={19}>
            <Icon k="dimEdit" />
          </Panel>
          <Combo $w={96} $gap={1} $pad={13}>ISO-25</Combo>
          <Panel $w={21}>
            <Icon k="tableStyle" />
          </Panel>
          <Combo $w={96} $pad={3}>Standard</Combo>
          <Panel $w={21} $gap={3}>
            <Icon k="mleader" />
          </Panel>
        </ToolRow>

        <ToolRow>
          <Panel $w={110}>
            <Icons list="lockA lockH lockV lockAng lockR lockD" />
          </Panel>
          <Panel $w={216} $gap={8}>
            <Icons list="perp geo tag tagBulb tagQ | tri dimPin dimFrame | delete tagPen" />
            <FxLabel>fx</FxLabel>
          </Panel>
          <Panel $w={220} $gap={9}>
            <Icons list="redCheck vee slashes knot tangent stripes crossY target fork mirror equal bigLock" />
          </Panel>
          <Panel $w={393} $gap={10}>
            <Icons list="hDim alDim arcDim ordDim | radius jogged diam angle | quick base cont tolBox tee | tolerance center inspect jogLine | dimEdit dimText dimUpdate" />
          </Panel>
          <Combo $w={95} $pad={30}>ISO-25</Combo>
          <Panel $w={19}>
            <Icon k="dimEdit" />
          </Panel>
        </ToolRow>

        <ToolRow>
          <Combo $w={138} $pad={7}>
            <ComboCjk>学习交流群：421246724</ComboCjk>
          </Combo>
          <Panel $w={38}>
            <Icons list="gear wsSave" />
          </Panel>
          <Panel $w={346} $gap={9} $tint>
            <Icons list="vennA vennB vennC | faceMove cross stack faceDel faceRot faceTaper faceCopy faceColor | edgeCopy edgeColor | imprint clean separate shell check" />
          </Panel>
          <Panel $w={420} $gap={8}>
            <Icons list="polysolid box wedge cone sphere cylinder torus pyramid mesh planar | extrude press sweep revolve loft | vennA vennB vennC | gizmo pink ucsL grid" />
          </Panel>
          <Panel $w={119} $gap={9}>
            <Icons list="regen | wire wire blueBall colorBall | render" />
          </Panel>
        </ToolRow>
      </ToolArea>

      <Viewports>
        <Sash>
          <Canvas viewBox="8 110 587 494">
            <rect x="41" y="141" width="532" height="393" fill="#ececec" />
            <rect x="41" y="141" width="532" height="13" fill="#e3e7ee" />
            <rect x="41" y="141" width="9" height="393" fill="#e4e7f0" />
            <Wheel />
            <path d="M308 110V604" stroke="#8c8c50" strokeOpacity=".65" />
            <path d="M16 337H595" stroke="#c07a60" strokeOpacity=".6" />
            <circle cx="258" cy="344" r="15" fill="none" stroke="#e09a9a" strokeWidth="2" strokeOpacity=".7" />
            <Ucs x={23} y={589} />
          </Canvas>
        </Sash>
        <RightCanvas viewBox="598 110 582 494">
          <Ucs x={612} y={589} />
        </RightCanvas>
      </Viewports>

      <TabBar>
        <TabNav>|◂</TabNav>
        <TabNav>◂</TabNav>
        <TabNav>▸</TabNav>
        <TabNav>▸|</TabNav>
        <ActiveTab>模型</ActiveTab>
        <Tab>
          小谢老师QQ: <b>1018157246</b>
        </Tab>
        <TabSlash>/</TabSlash>
        <Tab>
          学习交流群: <b>421246724</b>
        </Tab>
        <TabSlash>/</TabSlash>
        <Tab>上壹教育</Tab>
        <TabSlash>/</TabSlash>
      </TabBar>

      <CommandWindow>
        <History>
          <CommandLine>命令: *取消*</CommandLine>
          <CommandLine>命令: 指定对角点:</CommandLine>
          <CommandLine>命令: 指定对角点:</CommandLine>
          <CommandLine>命令: 指定对角点:</CommandLine>
        </History>
        <InputRow>
          <CommandLine>命令:</CommandLine>
        </InputRow>
        <QQ>QQ:421246724</QQ>
        <VScroll />
        <HScroll>
          ‹<i />›
        </HScroll>
      </CommandWindow>

      <StatusBar>
        <Coords>3904.4681, 2062.8884, 0.0000</Coords>
        <StatusToggle $w={21} $dark>捕捉</StatusToggle>
        <StatusToggle $w={23}>栅格</StatusToggle>
        <StatusToggle $w={23}>正交</StatusToggle>
        <StatusToggle $w={25} $on>极轴</StatusToggle>
        <StatusToggle $w={43} $on>对象捕捉</StatusToggle>
        <StatusToggle $w={42} $on>对象追踪</StatusToggle>
        <StatusToggle $w={22} $mono>DUCS</StatusToggle>
        <StatusToggle $w={19} $mono>DYN</StatusToggle>
        <StatusToggle $w={23} $on>线宽</StatusToggle>
        <StatusToggle $w={13} $mono>QP</StatusToggle>
        <StatusGroup $ml={302} $w={62}>
          模型
          <Icon k="paper" />
          <Icon k="twoPanes" />
        </StatusGroup>
        <StatusGroup $ml={12} $w={72}>
          <Icons list="hand zoom wheel motion" />
        </StatusGroup>
        <StatusGroup $ml={18} $w={35}>
          <Icon k="anno" />
          <b>1:1</b>
          <Caret />
        </StatusGroup>
        <StatusGroup $ml={2} $w={36}>
          <Icon k="annoY" />
          <Icon k="annoFade" />
        </StatusGroup>
        <StatusGroup $ml={4} $w={128}>
          <Icon k="wsGear" />
          <span>
            学习交流群: <b>421246724</b>
          </span>
          <Caret />
        </StatusGroup>
        <StatusGroup $ml={1} $w={20}>
          <Icon k="tool" />
        </StatusGroup>
        <StatusGroup $ml={6} $w={32}>
          <Caret />
          <Icon k="clean2" />
        </StatusGroup>
      </StatusBar>
      <BottomEdge />
    </Shell>
  );
}
